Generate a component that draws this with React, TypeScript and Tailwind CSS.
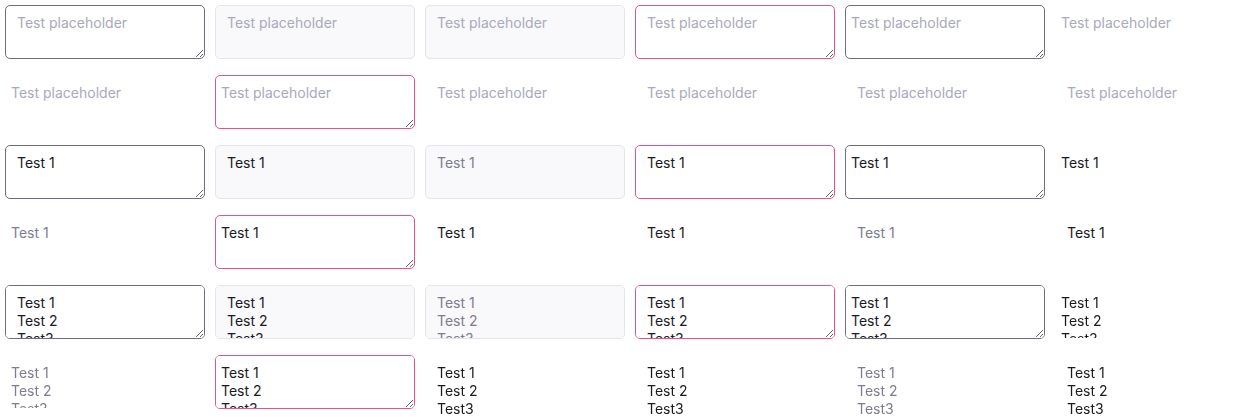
import React from "react";

type Kind = "border" | "filled" | "disabled" | "error" | "plain" | "plainOff";

interface Cell {
  kind: Kind;
  wide: boolean; // 12px inner spacing vs 6px
}

const pattern: Cell[][] = [
  [
    { kind: "border", wide: true },
    { kind: "filled", wide: true },
    { kind: "disabled", wide: true },
    { kind: "error", wide: true },
    { kind: "border", wide: false },
    { kind: "plain", wide: false },
  ],
  [
    { kind: "plainOff", wide: false },
    { kind: "error", wide: false },
    { kind: "plain", wide: true },
    { kind: "plain", wide: true },
    { kind: "plainOff", wide: true },
    { kind: "plain", wide: true },
  ],
];

const kindClass: Record<Kind, string> = {
  border: "border-[#6e6e80] bg-white text-[#1a1a1f]",
  filled: "border-[#e4e4ec] bg-[#f9f9fb] text-[#1a1a1f] resize-none",
  disabled: "border-[#e4e4ec] bg-[#f9f9fb] text-[#7d7d91] resize-none",
  error: "border-[#e8528b] bg-white text-[#1a1a1f]",
  plain: "border-transparent bg-transparent text-[#1a1a1f] resize-none",
  plainOff: "border-transparent bg-transparent text-[#7d7d91] resize-none",
};

function Field({ cell, value, tall }: { cell: Cell; value: string; tall?: boolean }) {
  const off = cell.kind === "disabled" || cell.kind === "plainOff";
  const grow = tall && (cell.kind === "plain" || cell.kind === "plainOff") && cell.wide;
  return (
    <textarea
      readOnly
      disabled={off}
      rows={grow ? 3 : 2}
      value={value}
      placeholder="Test placeholder"
      onChange={() => {}}
      className={`block w-[200px] rounded-[5px] border py-2 text-[14px] leading-[18px] outline-none placeholder:text-[#a9a9bc] disabled:opacity-100 ${
        cell.wide ? "px-[11px]" : "px-[5px]"
      } ${kindClass[cell.kind]}`}
    />
  );
}

const groups = ["", "Test 1", "Test 1\nTest 2\nTest3"];

export default function App() {
  return (
    <div
      className="grid grid-cols-[repeat(6,200px)] items-start gap-x-[10px] gap-y-[16px] bg-white p-[5px]"
      style={{ fontFamily: "Inter, 'Noto Sans', sans-serif" }}
    >
      {groups.map((value, g) =>
        pattern.map((row, r) =>
          row.map((cell, c) => (
            <Field key={`${g}-${r}-${c}`} cell={cell} value={value} tall={g === 2 && r === 1} />
          ))
        )
      )}
    </div>
  );
}
